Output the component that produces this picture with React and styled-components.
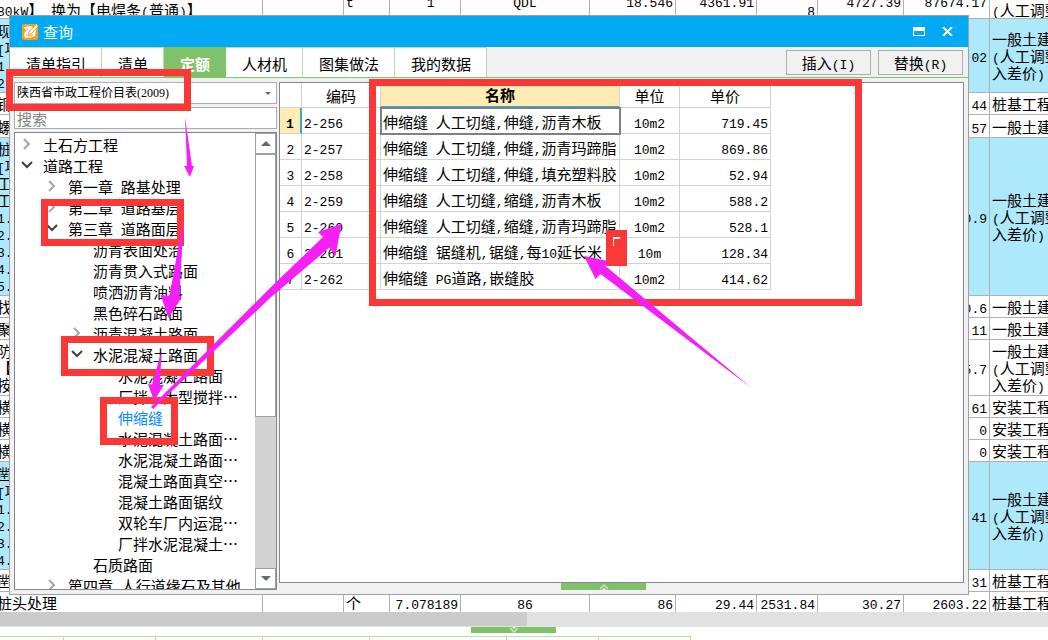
import React, { useState } from "react";
import styled, { createGlobalStyle, css } from "styled-components";

const GlobalStyle = createGlobalStyle`
  * {
    box-sizing: border-box;
  }
  body {
    margin: 0;
    background: #fff;
    color: #000;
    font: 15px/17px "Noto Sans CJK SC", sans-serif;
  }
  button, input, select {
    font: inherit;
    color: inherit;
    margin: 0;
  }
`;

const Page = styled.div`
  position: relative;
  height: 100vh;
  overflow: hidden;
`;

const Latin = styled.span`
  font-family: "Liberation Mono", monospace;
  font-size: 13px;
  line-height: 10px;
`;

// latin runs are set half as wide as the chinese characters
const Mixed = ({ children }) =>
  children
    .split(/([\x20-\x7e]+)/)
    .map((part, i) => (i % 2 ? <Latin key={i}>{part}</Latin> : part));

/* ---------- sheet behind the dialog ---------- */

const Sheet = styled.table`
  width: calc(100% + 63px);
  margin: -17px 0 0 -5px;
  border-spacing: 0;
  table-layout: fixed;
`;

const SheetRow = styled.tr`
  height: ${p => p.$height}px;
  background: ${p => (p.$marked ? "#aee8fb" : "#fff")};
`;

const SheetCell = styled.td`
  padding: 0 2px;
  border-right: 1px solid #b0b0b0;
  border-bottom: 1px solid #b0b0b0;
  text-align: ${p => p.$align || "left"};
  vertical-align: middle;
  white-space: pre;
  overflow: hidden;

  ${SheetRow}:last-child & {
    border-bottom: 0;
  }
`;

const SheetScroll = styled.div`
  height: 15px;
  background: #e1e1e1;
`;

const SheetThumb = styled.div`
  width: 527px;
  height: 14px;
  background: #cbcbcb;
`;

const Handle = styled.button`
  display: flex;
  justify-content: center;
  align-items: center;
  width: 85px;
  height: ${p => p.$height}px;
  padding: 0;
  border: 0;
  background: #80c269;
`;

const SheetHandle = styled(Handle)`
  margin-left: 471px;
`;

const LowerTabs = styled.div`
  display: flex;
  width: 691px;
  height: 20px;
  margin-top: 3px;
  border-top: 1px solid #b2e29c;
`;

const LowerTab = styled.div`
  width: ${p => p.$width}px;
  border-right: 1px solid #b2e29c;
`;

/* ---------- dialog ---------- */

const Dialog = styled.section`
  position: absolute;
  inset: 15px 79px 45px 9px;
  display: flex;
  flex-direction: column;
  border: 1px solid #a0a0a0;
  background: #f1f1f1;
`;

const TitleBar = styled.header`
  display: flex;
  align-items: center;
  gap: 5px;
  height: 31px;
  padding: 0 14px 0 12px;
  background: #02a9f3;
  color: #fff;
`;

const Title = styled.h1`
  flex: 1;
  margin: 0;
  font-size: 15px;
  font-weight: 400;
`;

const WindowButton = styled.button`
  display: flex;
  padding: 0;
  margin-left: 11px;
  border: 0;
  background: none;
`;

const TabBar = styled.nav`
  display: flex;
  height: 31px;
  border-bottom: 1px solid #7fc56a;
`;

const Tab = styled.button`
  padding: 1px 15px 0 16px;
  border: 0;
  border-top: 1px solid #b2e29c;
  border-right: 1px solid #b2e29c;
  background: #fff;
  white-space: nowrap;

  ${p =>
    p.$active &&
    css`
      border-color: #80c269;
      background: #80c269;
      color: #fff;
      font-weight: 700;
    `}
`;

const Actions = styled.div`
  display: flex;
  gap: 7px;
  margin-left: auto;
  padding: 3px 5px 2px 0;
`;

const ActionButton = styled.button`
  width: 85px;
  padding: 0;
  border: 1px solid #adadad;
  background: #f1f1f1;
`;

const Body = styled.div`
  display: flex;
  flex: 1;
  gap: 2px;
  min-height: 0;
  padding: 4px;
`;

const Sidebar = styled.div`
  display: flex;
  flex-direction: column;
  gap: 3px;
  width: 263px;
`;

const SelectBox = styled.div`
  display: grid;
  align-items: center;
  height: 22px;
  border: 1px solid #abadb3;
  background: #fff;

  > * {
    grid-area: 1 / 1;
  }
  svg {
    justify-self: end;
    margin-right: 5px;
    pointer-events: none;
  }
`;

const Select = styled.select`
  width: 100%;
  height: 20px;
  padding: 0 2px;
  border: 0;
  appearance: none;
  background: none;
  font: 12px "Liberation Serif", "Noto Sans CJK SC", serif;
`;

const Search = styled.input`
  height: 22px;
  padding: 0 2px;
  border: 1px solid #abadb3;
  background: #fff;

  &::placeholder {
    color: #808080;
    opacity: 1;
  }
`;

const TreeBox = styled.div`
  display: flex;
  flex: 1;
  min-height: 0;
  overflow: hidden;
  border: 1px solid #828790;
  background: #fff;
`;

const Tree = styled.ul`
  flex: 1;
  min-width: 0;
  margin: 0;
  padding: 1px 0 0;
  list-style: none;
`;

const TreeItem = styled.li`
  display: flex;
  align-items: center;
  height: 21px;
  padding-left: ${p => 6 + p.$level * 25}px;
  color: ${p => (p.$selected ? "#0a8cf5" : "#000")};
  white-space: pre;
`;

const Twist = styled.span`
  display: flex;
  flex: none;
  width: 22px;
  height: 14px;
`;

const ScrollBar = styled.div`
  display: flex;
  flex-direction: column;
  width: 21px;
  background: #d3d3d3;
`;

const ScrollButton = styled.button`
  display: flex;
  justify-content: center;
  align-items: center;
  height: 21px;
  padding: 0;
  border: 1px solid #a0a0a0;
  background: #fff;
`;

const ScrollThumb = styled.div`
  flex: 0 0 263px;
  margin-bottom: auto;
  border: 1px solid #a0a0a0;
  background: #fff;
`;

const Main = styled.div`
  display: flex;
  flex-direction: column;
  flex: 1;
  min-width: 0;
`;

const GridBox = styled.div`
  flex: 1;
  border: 1px solid #828790;
  background: #fff;
`;

const Grid = styled.table`
  width: 491px;
  border-spacing: 0;
  table-layout: fixed;
`;

const GridHead = styled.th`
  height: 25px;
  padding: 0;
  border-right: 1px solid #d3d3d3;
  border-bottom: 1px solid #d3d3d3;
  font-weight: 400;

  ${p =>
    p.$active &&
    css`
      border-bottom: 2px solid #3ba5d0;
      background: #ffecb2;
      font-weight: 700;
    `}
`;

const GridCell = styled.td`
  height: 26px;
  padding: 2px 2px 0;
  border-right: 1px solid #d3d3d3;
  border-bottom: 1px solid #d3d3d3;
  text-align: ${p => p.$align || "left"};
  white-space: pre;

  ${p =>
    p.$picked &&
    css`
      outline: 2px solid #808080;
      outline-offset: -1px;
    `}
`;

const RowNumber = styled(GridCell)`
  text-align: center;

  ${p =>
    p.$active &&
    css`
      border-right: 2px solid #3ba5d0;
      background: #ffecb2;
      font-weight: 700;
    `}
`;

const GridHandle = styled(Handle)`
  align-self: center;
  margin-right: 36px;
`;

const Marks = styled.svg`
  position: absolute;
  top: 0;
  left: 0;
  pointer-events: none;
`;

/* ---------- data ---------- */

const columns = [268, 81, 46, 71, 129, 86, 81, 61, 86, 86];
const aligns = ["left", "left", "left", "right", "center", "right", "right", "right", "right", "right", "left"];

const civil = "一般土建工程";
const adjusted = "一般土建工程\n(人工调整计\n入差价)";

const row = (height, first, total, last, marked) => ({
  height,
  marked,
  cells: [first, "", "", "", "", "", "", "", "", total, last]
});

const sheetRows = [
  {
    height: 36,
    cells: [" \n80kW】 换为【电焊条(普通)】", "", "t", "1   ", "QDL", "18.546", "4361.91", " \n8", "4727.39", "87674.17", " \n(人工调整计"]
  },
  row(74, "现浇\n[项\n1.\n2.", "02", adjusted, true),
  row(22, "铜", "44", "桩基工程"),
  row(23, "螺", "57", civil),
  row(158, "桩\n[项\n工\n工\n1.\n2.\n3.\n4.\n5.", "0.9", adjusted, true),
  row(22, "找", "0.6", civil),
  row(22, "聚", "11", civil),
  row(56, "防\n【\n按", "5.7", adjusted),
  row(22, "横", "61", "安装工程"),
  row(22, "横", "0", "安装工程"),
  row(22, "横", "0", "安装工程"),
  row(108, "凿\n[项\n1.\n2.\n3.\n4.", "41", adjusted, true),
  row(22, "凿", "31", "桩基工程"),
  {
    height: 20,
    cells: ["桩头处理", "", "个", "7.078189", "86", "86", "29.44", "2531.84", "30.27", "2603.22", "桩基工程"]
  }
];

const tabs = ["清单指引", "清单", "定额", "人材机", "图集做法", "我的数据"];

const tree = [
  [0, "土石方工程", "closed"],
  [0, "道路工程", "open"],
  [1, "第一章 路基处理", "closed"],
  [1, "第二章 道路基层", "closed"],
  [1, "第三章 道路面层", "open"],
  [2, "沥青表面处治"],
  [2, "沥青贯入式路面"],
  [2, "喷洒沥青油料"],
  [2, "黑色碎石路面"],
  [2, "沥青混凝土路面", "closed"],
  [2, "水泥混凝土路面", "open"],
  [3, "水泥混凝土路面"],
  [3, "厂拌、大型搅拌…"],
  [3, "伸缩缝"],
  [3, "水泥混凝土路面…"],
  [3, "水泥混凝土路面…"],
  [3, "混凝土路面真空…"],
  [3, "混凝土路面锯纹"],
  [3, "双轮车厂内运混…"],
  [3, "厂拌水泥混凝土…"],
  [2, "石质路面"],
  [1, "第四章 人行道缘石及其他", "closed"]
];

const items = [
  ["2-256", "伸缩缝 人工切缝,伸缝,沥青木板", "10m2", "719.45"],
  ["2-257", "伸缩缝 人工切缝,伸缝,沥青玛蹄脂", "10m2", "869.86"],
  ["2-258", "伸缩缝 人工切缝,伸缝,填充塑料胶", "10m2", "52.94"],
  ["2-259", "伸缩缝 人工切缝,缩缝,沥青木板", "10m2", "588.2"],
  ["2-260", "伸缩缝 人工切缝,缩缝,沥青玛蹄脂", "10m2", "528.1"],
  ["2-261", "伸缩缝 锯缝机,锯缝,每10延长米", "10m", "128.34"],
  ["2-262", "伸缩缝 PG道路,嵌缝胶", "10m2", "414.62"]
];

/* ---------- icons ---------- */

const Logo = () => (
  <svg width="16" height="16" viewBox="0 0 16 16">
    <rect width="16" height="16" rx="2" fill="#fb9f14" />
    <path d="M2 3l7-1 5 4-1 6-5 2H3L2 10l2-3z" fill="#fff" />
    <path d="M14.500 0L7 8l-.5 2.500L9 10l6.500-7" fill="#fff" stroke="#fb9f14" />
    <path d="M2 7c2-1 3-1 4-2M4 10c0 2 3 2.500 7 1" fill="none" stroke="#fb9f14" />
  </svg>
);

const Chevron = ({ open }) => (
  <svg width="14" height="14" viewBox="0 0 14 14" fill="none" strokeWidth="2">
    {open ? (
      <path d="M1 3l5 5 5-5" stroke="#404040" />
    ) : (
      <path d="M3 1l5 5-5 5" stroke="#a6a6a6" />
    )}
  </svg>
);

const Triangle = ({ up, width = 10, height = 5 }) => (
  <svg width={width} height={height} viewBox="0 0 10 5">
    <path d={up ? "M0 5L5 0l5 5z" : "M0 0h10L5 5z"} fill="#606878" />
  </svg>
);

const HandleArrow = ({ down }) => (
  <svg width="10" height="6" viewBox="0 0 10 6">
    <path d={down ? "M1 1l4 4 4-4" : "M1 5l4-4 4 4"} fill="none" stroke="#c5eab8" strokeWidth="1.500" />
    <path d={down ? "M3 0h4L5 2z" : "M3 6h4L5 4z"} fill="#fff" />
  </svg>
);

const Annotations = () => (
  <Marks width="1048" height="640" viewBox="0 0 1048 640">
    <g fill="none" stroke="#fb3838" strokeWidth="7">
      <path d="M9.500 72.500h178v35h-178z" />
      <path d="M44.500 202.500h136v40h-136z" />
      <path d="M64.500 339.500h146v33h-146z" />
      <path d="M103.500 400.500h71v41h-71z" />
      <path d="M372.500 82.500h486v220h-486z" />
    </g>
    <path d="M606 230h21v36h-21z" fill="#fb3838" />
    <path d="M613 237h7v2h-6v7h-1z" fill="#fff" />
    <g fill="#f620f6">
      <path d="M185 117L192 166h2l-4 11-6-11h3z" />
      <path d="M183.500 218l-4 78 2.500 1-13.500 21-8-23 9 1z" />
      <path d="M161.500 351l-1.500 34h4l-10 16-6-17 4 .5z" />
      <path d="M151 407L270 288 323 237l-5-5 23.500-8-6 32-6-8.500L270 298 153 409z" />
      <path d="M751.500 388L600.500 274l-5 5-11.500-23 24 5-2.500 5z" />
    </g>
  </Marks>
);

const App = () => {
  const [tab, setTab] = useState("定额");

  return (
    <Page>
      <GlobalStyle />
      <Sheet>
        <colgroup>
          {columns.map((width, i) => (
            <col key={i} style={{ width }} />
          ))}
          <col />
        </colgroup>
        <tbody>
          {sheetRows.map((r, i) => (
            <SheetRow key={i} $height={r.height} $marked={r.marked}>
              {r.cells.map((text, j) => (
                <SheetCell key={j} $align={aligns[j]}>
                  <Mixed>{text}</Mixed>
                </SheetCell>
              ))}
            </SheetRow>
          ))}
        </tbody>
      </Sheet>
      <SheetScroll>
        <SheetThumb />
      </SheetScroll>
      <SheetHandle $height={6} aria-label="展开">
        <HandleArrow down />
      </SheetHandle>
      <LowerTabs>
        {[64, 92, 107, 107, 137, 92, 92].map((width, i) => (
          <LowerTab key={i} $width={width} />
        ))}
      </LowerTabs>

      <Dialog>
        <TitleBar>
          <Logo />
          <Title>查询</Title>
          <WindowButton aria-label="最大化">
            <svg width="12" height="9" viewBox="0 0 12 9">
              <path d="M0 0h12v9H0zM1 4v4h10V4z" fill="#fff" fillRule="evenodd" />
            </svg>
          </WindowButton>
          <WindowButton aria-label="关闭">
            <svg width="13" height="9" viewBox="0 0 13 9">
              <path d="M2 0l9 9M11 0L2 9" stroke="#fff" strokeWidth="2" />
            </svg>
          </WindowButton>
        </TitleBar>
        <TabBar>
          {tabs.map(name => (
            <Tab key={name} $active={name === tab} onClick={() => setTab(name)}>
              {name}
            </Tab>
          ))}
          <Actions>
            <ActionButton>
              <Mixed>插入(I)</Mixed>
            </ActionButton>
            <ActionButton>
              <Mixed>替换(R)</Mixed>
            </ActionButton>
          </Actions>
        </TabBar>
        <Body>
          <Sidebar>
            <SelectBox>
              <Select aria-label="价目表">
                <option>陕西省市政工程价目表(2009)</option>
              </Select>
              <Triangle width={6} height={3} />
            </SelectBox>
            <Search placeholder="搜索" aria-label="搜索" />
            <TreeBox>
              <Tree>
                {tree.map(([level, name, state], i) => (
                  <TreeItem key={i} $level={level} $selected={name === "伸缩缝"}>
                    <Twist>{state && <Chevron open={state === "open"} />}</Twist>
                    <span>
                      <Mixed>{name}</Mixed>
                    </span>
                  </TreeItem>
                ))}
              </Tree>
              <ScrollBar>
                <ScrollButton aria-label="向上">
                  <Triangle up />
                </ScrollButton>
                <ScrollThumb />
                <ScrollButton aria-label="向下">
                  <Triangle />
                </ScrollButton>
              </ScrollBar>
            </TreeBox>
          </Sidebar>
          <Main>
            <GridBox>
              <Grid>
                <colgroup>
                  {[22, 79, 239, 60, 91].map((width, i) => (
                    <col key={i} style={{ width }} />
                  ))}
                </colgroup>
                <thead>
                  <tr>
                    <GridHead />
                    <GridHead>编码</GridHead>
                    <GridHead $active>名称</GridHead>
                    <GridHead>单位</GridHead>
                    <GridHead>单价</GridHead>
                  </tr>
                </thead>
                <tbody>
                  {items.map(([code, name, unit, price], i) => (
                    <tr key={code}>
                      <RowNumber $active={i === 0}>
                        <Mixed>{String(i + 1)}</Mixed>
                      </RowNumber>
                      <GridCell>
                        <Mixed>{code}</Mixed>
                      </GridCell>
                      <GridCell $picked={i === 0}>
                        <Mixed>{name}</Mixed>
                      </GridCell>
                      <GridCell $align="center">
                        <Mixed>{unit}</Mixed>
                      </GridCell>
                      <GridCell $align="right">
                        <Mixed>{price}</Mixed>
                      </GridCell>
                    </tr>
                  ))}
                </tbody>
              </Grid>
            </GridBox>
            <GridHandle $height={7} aria-label="收起">
              <HandleArrow />
            </GridHandle>
          </Main>
        </Body>
      </Dialog>
      <Annotations />
    </Page>
  );
};

export default App;
